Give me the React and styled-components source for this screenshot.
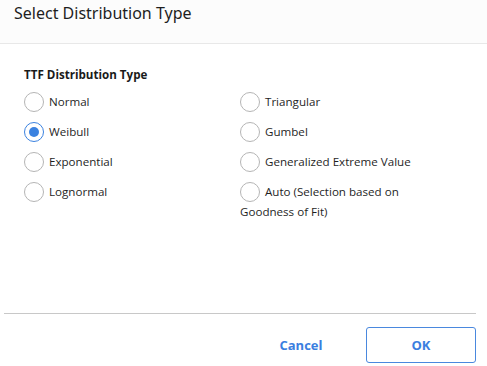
import React, { useState } from "react";
import styled, { createGlobalStyle } from "styled-components";

const GlobalStyle = createGlobalStyle`
  html, body {
    margin: 0;
    padding: 0;
    background: #ffffff;
  }
  body {
    font-family: "Open Sans", "Noto Sans", Arial, sans-serif;
  }
`;

const Dialog = styled.div`
  width: 487px;
  height: 366px;
  display: flex;
  flex-direction: column;
  background: #ffffff;
  box-sizing: border-box;
`;

const Header = styled.div`
  height: 44px;
  box-sizing: border-box;
  background: #fcfcfc;
  border-bottom: 1px solid #e8e8e8;
  padding: 2px 0 0 14px;
`;

const Title = styled.h1`
  margin: 0;
  font-family: "Noto Sans", "Open Sans", sans-serif;
  font-weight: 400;
  font-size: 16px;
  line-height: 22px;
  color: #1e1e1e;
`;

const Body = styled.div`
  flex: 1;
  padding: 23px 0 0 24px;
`;

const GroupLabel = styled.div`
  font-size: 11.6px;
  font-weight: 700;
  color: #1a1a1a;
  line-height: 16px;
  margin-bottom: 8px;
`;

const Options = styled.div`
  display: grid;
  grid-template-columns: 216px 216px;
  grid-auto-flow: column;
  grid-template-rows: repeat(4, 30px);
`;

const Option = styled.label`
  display: block;
  max-width: 190px;
  font-size: 11.6px;
  line-height: 20px;
  color: #1f1f1f;
  cursor: pointer;
  padding-top: 1px;
`;

const Circle = styled.span`
  display: inline-block;
  vertical-align: top;
  box-sizing: border-box;
  width: 20px;
  height: 20px;
  margin-right: 5px;
  border-radius: 50%;
  border: 1px solid ${(p) => (p.checked ? "#3b82e0" : "#b5b5b5")};
  background: #ffffff;
  position: relative;

  &::after {
    content: "";
    display: ${(p) => (p.checked ? "block" : "none")};
    position: absolute;
    left: 4px;
    top: 4px;
    width: 10px;
    height: 10px;
    border-radius: 50%;
    background: #3b82e0;
  }
`;

const Footer = styled.div`
  margin: 0 11px 0 4px;
  border-top: 1px solid #c8c8c8;
  height: 52px;
  display: flex;
  align-items: center;
  justify-content: flex-end;
  gap: 15px;
`;

const Button = styled.button`
  font-family: "Open Sans", "Noto Sans", sans-serif;
  font-size: 13px;
  font-weight: 700;
  color: #3a7ee0;
  background: #ffffff;
  width: ${(p) => (p.outlined ? "110px" : "100px")};
  height: 36px;
  border-radius: 3px;
  border: 1px solid ${(p) => (p.outlined ? "#4a88de" : "transparent")};
  cursor: pointer;
  margin-top: 10px;
`;

const options = [
  "Normal",
  "Weibull",
  "Exponential",
  "Lognormal",
  "Triangular",
  "Gumbel",
  "Generalized Extreme Value",
  "Auto (Selection based on Goodness of Fit)",
];

export default function App() {
  const [selected, setSelected] = useState("Weibull");
  return (
    <Dialog>
      <GlobalStyle />
      <Header>
        <Title>Select Distribution Type</Title>
      </Header>
      <Body>
        <GroupLabel>TTF Distribution Type</GroupLabel>
        <Options>
          {options.map((name) => (
            <Option key={name} onClick={() => setSelected(name)}>
              <Circle checked={selected === name} />
              {name}
            </Option>
          ))}
        </Options>
      </Body>
      <Footer>
        <Button>Cancel</Button>
        <Button outlined>OK</Button>
      </Footer>
    </Dialog>
  );
}
